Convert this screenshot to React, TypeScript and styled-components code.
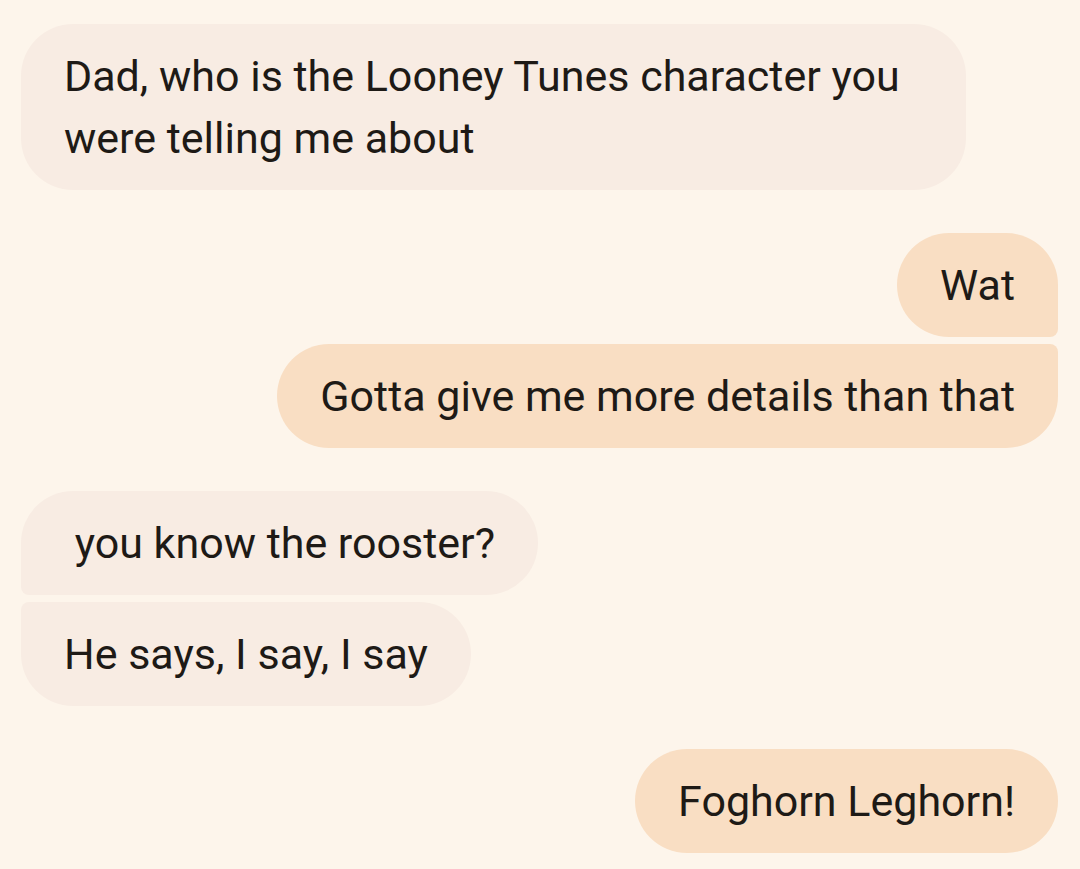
import React from 'react'
import styled, { createGlobalStyle, css } from 'styled-components'

const GlobalStyle = createGlobalStyle`
  html, body {
    margin: 0;
    padding: 0;
    background: #fdf5eb;
  }
  body {
    font-family: Roboto, "Noto Sans", "Liberation Sans", sans-serif;
  }
`

const Thread = styled.div`
  display: flex;
  flex-direction: column;
  gap: 43px;
  padding: 24px 22px 16px 21px;
`

const Group = styled.div<{ $mine?: boolean }>`
  display: flex;
  flex-direction: column;
  gap: 7px;
  align-items: ${p => (p.$mine ? 'flex-end' : 'flex-start')};
`

type Pos = 'single' | 'first' | 'last'

const big = '52px'
const small = '8px'

const Bubble = styled.div<{ $mine?: boolean; $pos: Pos }>`
  box-sizing: border-box;
  max-width: 945px;
  padding: 21px 43px;
  font-size: 43px;
  line-height: 62px;
  color: #1e1a16;
  white-space: pre-wrap;
  background: ${p => (p.$mine ? '#f9dec3' : '#f8ece3')};
  border-radius: ${big};
  ${p =>
    p.$pos === 'first' &&
    (p.$mine
      ? css`border-bottom-right-radius: ${small};`
      : css`border-bottom-left-radius: ${small};`)}
  ${p =>
    p.$pos === 'last' &&
    (p.$mine
      ? css`border-top-right-radius: ${small};`
      : css`border-top-left-radius: ${small};`)}
`

type Msg = { text: string; pos: Pos }
type Block = { mine: boolean; msgs: Msg[] }

const blocks: Block[] = [
  { mine: false, msgs: [{ text: 'Dad, who is the Looney Tunes character you were telling me about', pos: 'single' }] },
  {
    mine: true,
    msgs: [
      { text: 'Wat', pos: 'first' },
      { text: 'Gotta give me more details than that', pos: 'last' },
    ],
  },
  {
    mine: false,
    msgs: [
      { text: ' you know the rooster?', pos: 'first' },
      { text: 'He says, I say, I say', pos: 'last' },
    ],
  },
  { mine: true, msgs: [{ text: 'Foghorn Leghorn!', pos: 'single' }] },
]

const App = () => {
  return (
    <>
      <GlobalStyle />
      <Thread>
        {blocks.map((b, i) => (
          <Group key={i} $mine={b.mine}>
            {b.msgs.map((m, j) => (
              <Bubble key={j} $mine={b.mine} $pos={m.pos}>
                {m.text}
              </Bubble>
            ))}
          </Group>
        ))}
      </Thread>
    </>
  )
}

export default App
